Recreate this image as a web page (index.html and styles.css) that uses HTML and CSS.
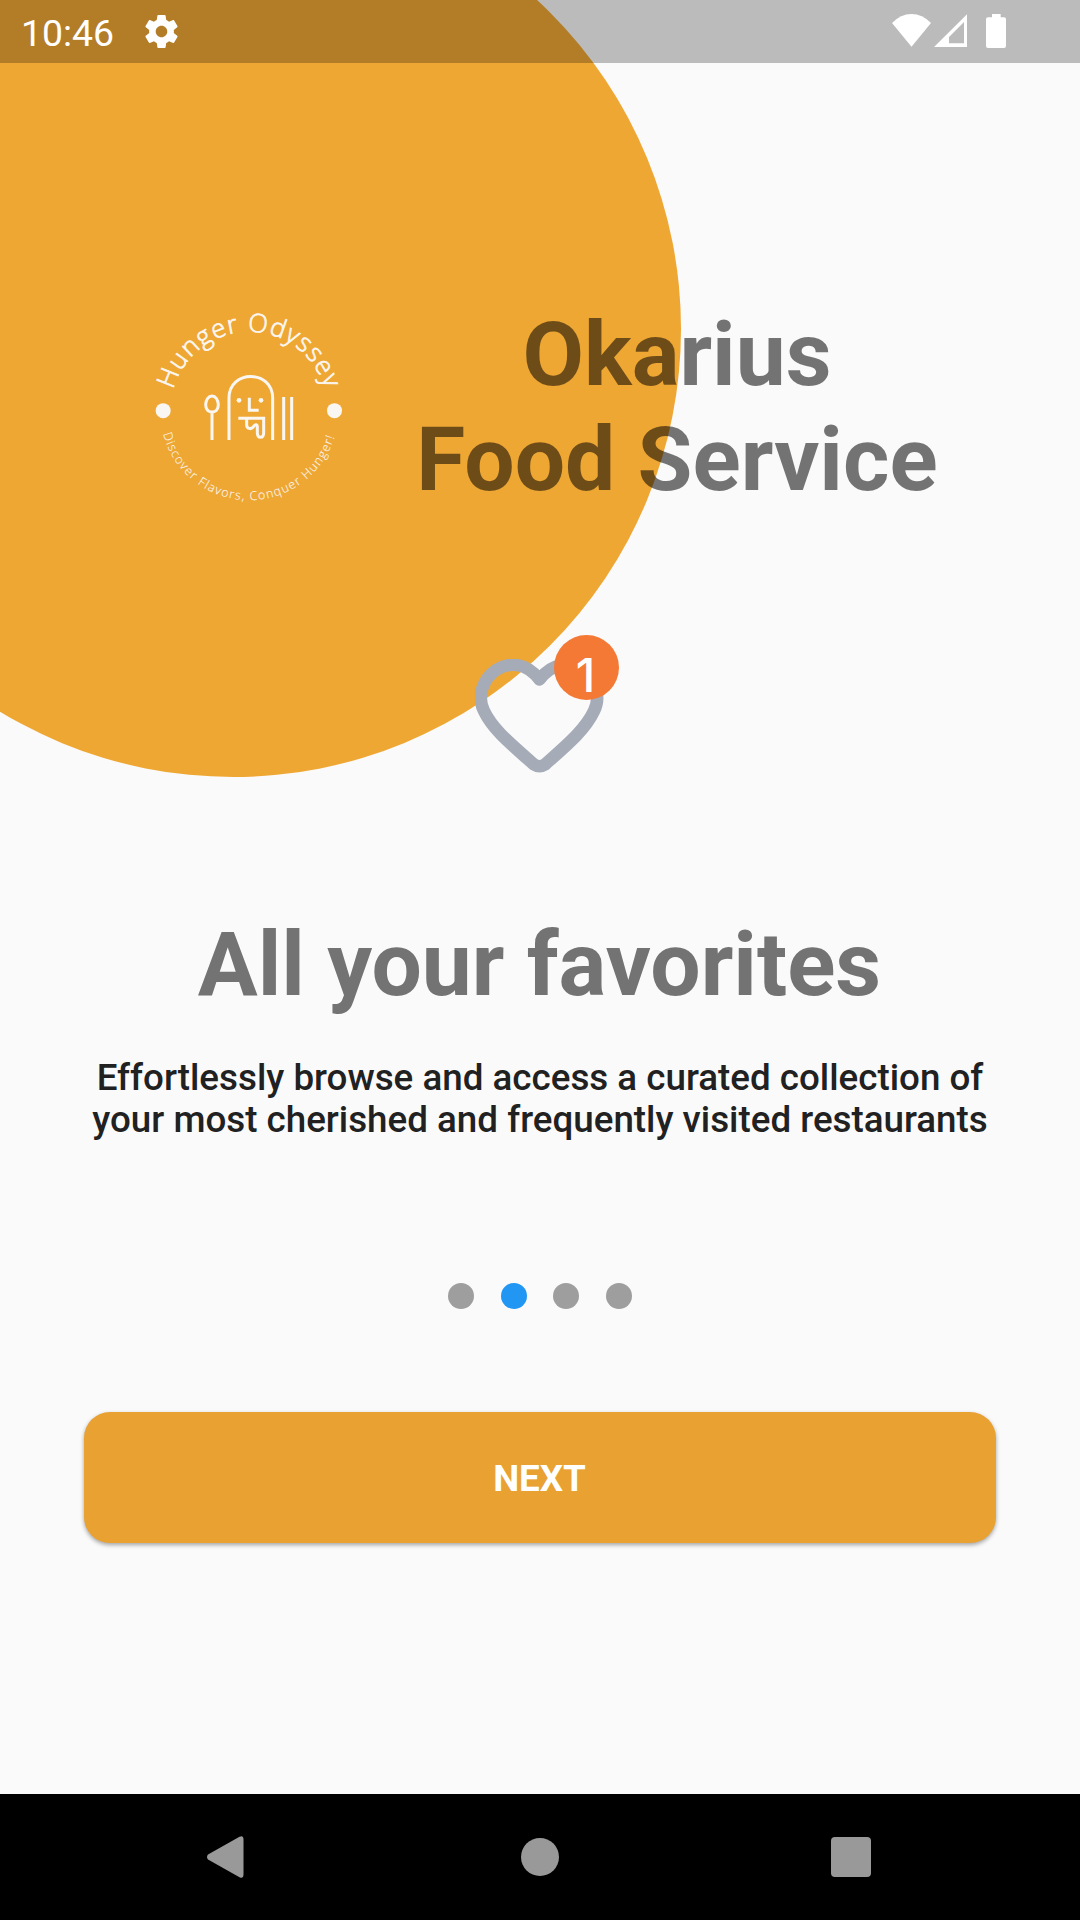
FILE: index.html
```html
<!DOCTYPE html>
<html lang="en">
<head>
<meta charset="utf-8">
<title>Okarius Food Service</title>
<link rel="stylesheet" href="styles.css">
</head>
<body>
<div class="screen">
  <div class="blob"></div>
  <header class="status">
    <span class="time">10:46</span>
    <svg class="gear" viewBox="2 2 20 20"><path fill="#fff" d="M19.43 12.98c.04-.32.07-.64.07-.98s-.03-.66-.07-.98l2.11-1.65c.19-.15.24-.42.12-.64l-2-3.46c-.12-.22-.39-.3-.61-.22l-2.49 1c-.52-.4-1.08-.73-1.69-.98l-.38-2.65C14.46 2.18 14.25 2 14 2h-4c-.25 0-.46.18-.49.42l-.38 2.65c-.61.25-1.17.59-1.69.98l-2.49-1c-.23-.09-.49 0-.61.22l-2 3.46c-.13.22-.07.49.12.64l2.11 1.65c-.04.32-.07.65-.07.98s.03.66.07.98l-2.11 1.65c-.19.15-.24.42-.12.64l2 3.46c.12.22.39.3.61.22l2.49-1c.52.4 1.08.73 1.69.98l.38 2.65c.03.24.24.42.49.42h4c.25 0 .46-.18.49-.42l.38-2.65c.61-.25 1.17-.59 1.69-.98l2.49 1c.23.09.49 0 .61-.22l2-3.46c.12-.22.07-.49-.12-.64l-2.11-1.65zM12 15.5c-1.93 0-3.5-1.57-3.5-3.5s1.57-3.5 3.5-3.5 3.5 1.57 3.5 3.5-1.57 3.5-3.5 3.5z"/></svg>
    <svg class="signals" viewBox="96 0 342 189">
      <g fill="#fff">
        <path d="M154.500 140L96 69Q122 42 154.500 42T213 69Z"/>
        <path fill-rule="evenodd" d="M222 141L321 43V141ZM267 111V130H312V66Z"/>
        <path d="M396 42H422V52H432Q438 52 438 58V138Q438 144 432 144H384Q378 144 378 138V58Q378 52 384 52H396Z"/>
      </g>
    </svg>
  </header>
  <main class="content">
    <section class="hero">
      <svg class="logo" viewBox="0 0 660 660">
        <defs>
          <path id="arc-top" d="M100 269A236 236 0 0 1 557 276"/>
          <path id="arc-bottom" d="M69 401A267 267 0 0 0 586 400"/>
        </defs>
        <g fill="#faf7f2">
          <text class="logo-name" textLength="612"><textPath href="#arc-top" textLength="612">Hunger Odyssey</textPath></text>
          <text class="logo-tag" textLength="692"><textPath href="#arc-bottom" textLength="692">Discover Flavors, Conquer Hunger!</textPath></text>
          <circle cx="69.500" cy="332" r="22.500"/>
          <circle cx="583.500" cy="332" r="22.500"/>
          <circle cx="297" cy="301" r="7"/>
          <circle cx="363" cy="301" r="7"/>
        </g>
        <g fill="none" stroke="#faf7f2" stroke-width="9">
          <path d="M267 420V294C267 208 398 208 398 294V420"/>
          <path d="M216 420V336C188 336 194 288 216 288S244 336 216 336M431 291V420M455 291V420"/>
          <path d="M328 293V331H356M295 355H371V398C371 416 352 416 352 398V381C352 370 344 373 339 382C333 389 320 386 320 375V357"/>
        </g>
      </svg>
      <h1 class="brand">Okarius<br>Food Service</h1>
    </section>
    <div class="favorite">
      <svg class="heart" viewBox="0 0 130 114"><path d="M64.500 20.500C51 3 34 3 21 11C7 21 2 38 9 52C18 71 37 86 59 105.500Q64.500 109 70 105.500C92 86 110 71 119 52C126 38 121 21 107 11C95 3 78 3 64.500 20.500Z" fill="none" stroke="#a5abb7" stroke-width="12.500" stroke-linejoin="round"/></svg>
      <span class="badge">1</span>
    </div>
    <h2 class="headline">All your favorites</h2>
    <p class="copy">Effortlessly browse and access a curated collection of<br>your most cherished and frequently visited restaurants</p>
    <div class="dots"><i class="dot"></i><i class="dot dot-active"></i><i class="dot"></i><i class="dot"></i></div>
    <button class="next">NEXT</button>
  </main>
  <nav class="navbar">
    <svg class="nav-icons" viewBox="0 0 665 42"><g fill="#999">
      <path d="M1 18.500L32.500 .8Q36.500-1 36.500 3V39Q36.500 43 32.500 41.200L1 23.500Q-1 21 1 18.500Z"/>
      <circle cx="333" cy="21" r="19"/>
      <rect x="624" y="1" width="40" height="40" rx="4"/>
    </g></svg>
  </nav>
</div>
</body>
</html>
```
FILE: styles.css
```css
* { box-sizing: border-box; }
body { margin: 0; font-family: Roboto, sans-serif; }
.screen {
  position: relative;
  display: flex;
  flex-direction: column;
  width: 1080px;
  height: 1920px;
  overflow: hidden;
  background: #fafafa;
}
.blob {
  position: absolute;
  left: -215px;
  top: -119px;
  width: 896px;
  height: 896px;
  border-radius: 50%;
  background: #efa734;
}
.status {
  position: relative;
  display: flex;
  height: 63px;
  padding-left: 21px;
  background: rgba(0, 0, 0, .25);
}
.time { width: 123.5px; font-size: 37.4px; line-height: 66px; color: #fff; }
.gear { width: 33px; height: 33px; margin-top: 15px; }
.signals { width: 114px; height: 63px; margin: 0 74px 0 auto; }
.content {
  position: relative;
  display: flex;
  flex-direction: column;
  align-items: center;
  height: 1731px;
}
.hero { display: flex; align-self: stretch; padding: 237px 0 0 140px; }
.logo { width: 220px; height: 220px; }
.logo-name,
.logo-tag {
  font-family: "Open Sans", sans-serif;
  font-weight: 300;
  stroke: #faf7f2;
}
.logo-name { font-size: 77px; stroke-width: 2.2px; }
.logo-tag { font-size: 37px; stroke-width: .3px; }
.brand, .headline {
  margin: 0;
  font-size: 89.25px;
  font-weight: 700;
  line-height: 105px;
  text-align: center;
  color: #737373;
}
.brand { width: 634px; margin-top: 2px; color: rgba(0, 0, 0, .54); }
.favorite { position: relative; width: 130px; height: 114px; margin-top: 139px; }
.heart { display: block; width: 130px; height: 114px; }
.badge {
  position: absolute;
  left: 79px;
  top: -24px;
  width: 65px;
  height: 65px;
  border-radius: 50%;
  background: #f37935;
  color: #fff;
  font-family: Inter, sans-serif;
  font-size: 47px;
  font-weight: 500;
  line-height: 80px;
  text-align: center;
  text-indent: -2px;
}
.headline { margin-top: 139px; padding-right: 1px; }
.copy {
  margin: 40px 0 0;
  font-size: 36.75px;
  font-weight: 500;
  line-height: 42px;
  text-align: center;
  white-space: nowrap;
  color: #212121;
}
.dots { display: flex; gap: 26.25px; margin-top: 142px; }
.dot { width: 26.25px; height: 26.25px; border-radius: 50%; background: #9e9e9e; }
.dot-active { background: #2196f3; }
.next {
  width: 912px;
  height: 131px;
  margin-top: 103px;
  padding: 2px 1px 0 0;
  border: 0;
  border-radius: 26px;
  background: #e9a132;
  box-shadow: 0 2px 4px rgba(0, 0, 0, .35);
  font: 700 36.75px/129px Roboto, sans-serif;
  color: #fff;
}
.navbar { position: relative; height: 126px; padding: 42px 0 0 207px; background: #000; }
.nav-icons { display: block; width: 665px; height: 42px; overflow: visible; }
```
